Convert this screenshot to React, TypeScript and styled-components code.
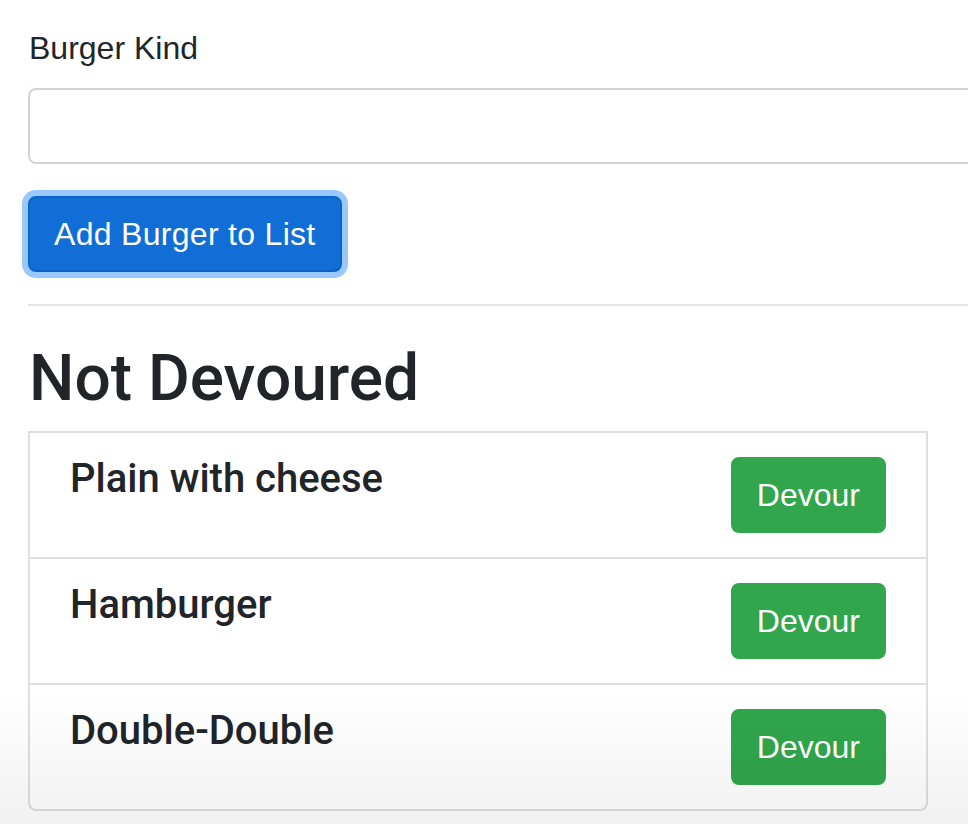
import React from "react";
import styled, { createGlobalStyle } from "styled-components";

const GlobalStyle = createGlobalStyle`
  html, body {
    margin: 0;
    padding: 0;
    background: #ffffff;
    overflow: hidden;
  }
  body {
    font-family: "Liberation Sans", Arial, sans-serif;
    color: #212529;
  }
  * { box-sizing: border-box; }
`;

const Page = styled.div`
  width: 1200px;
  padding: 24px 0 0 28px;
  min-height: 824px;
`;

const FormGroup = styled.div`
  display: flex;
  flex-direction: column;
  margin-bottom: 32px;
`;

const Label = styled.label`
  font-size: 32px;
  line-height: 48px;
  margin-bottom: 16px;
  padding-left: 1px;
`;

const TextInput = styled.input`
  display: block;
  width: 100%;
  height: 76px;
  border: 2px solid #ced4da;
  border-radius: 8px;
  background: #fff;
  font-size: 32px;
  padding: 12px 24px;
  font-family: inherit;
  outline: none;
`;

const PrimaryButton = styled.button`
  font-family: inherit;
  font-size: 32px;
  line-height: 48px;
  letter-spacing: 0.3px;
  padding: 12px 24px;
  color: #fff;
  background: #116ed7;
  border: 2px solid #0d63c8;
  border-radius: 8px;
  box-shadow: 0 0 0 6px #98c8fc;
  cursor: pointer;
  align-self: flex-start;
`;

const Rule = styled.hr`
  border: 0;
  border-top: 2px solid #e5e5e5;
  margin: 32px 0;
  height: 0;
`;

const Heading = styled.h2`
  font-family: Roboto, "Liberation Sans", Arial, sans-serif;
  font-size: 64px;
  font-weight: 500;
  line-height: 76.8px;
  margin: 0 0 13px 0;
  padding: 3px 0 0 1px;
`;

const ListGroup = styled.ul`
  list-style: none;
  margin: 0;
  padding: 0;
  width: 900px;
  display: flex;
  flex-direction: column;
`;

const ListItem = styled.li`
  display: flex;
  justify-content: space-between;
  align-items: flex-start;
  padding: 24px 40px;
  background: #fff;
  border: 2px solid #dfdfdf;
  border-top-width: 0;
  &:first-child {
    border-top-width: 2px;
  }
  &:last-child {
    border-radius: 0 0 8px 8px;
  }
`;

const ItemTitle = styled.h5`
  font-family: Roboto, "Liberation Sans", Arial, sans-serif;
  font-size: 40px;
  font-weight: 500;
  line-height: 48px;
  margin: -2px 0 0 0;
`;

const SuccessButton = styled.button`
  font-family: inherit;
  font-size: 32px;
  line-height: 48px;
  padding: 12px 24px;
  color: #fff;
  background: #31a64c;
  border: 2px solid #31a64c;
  border-radius: 8px;
  cursor: pointer;
`;

const BottomFade = styled.div`
  position: fixed;
  left: 0;
  right: 0;
  bottom: 0;
  height: 130px;
  pointer-events: none;
  background: linear-gradient(to bottom, rgba(0, 0, 0, 0), rgba(0, 0, 0, 0.055));
`;

const burgers = ["Plain with cheese", "Hamburger", "Double-Double"];

export default function App() {
  return (
    <>
      <GlobalStyle />
      <Page>
        <FormGroup>
          <Label htmlFor="burger">Burger Kind</Label>
          <TextInput id="burger" type="text" />
        </FormGroup>
        <PrimaryButton type="button">Add Burger to List</PrimaryButton>
        <Rule />
        <Heading>Not Devoured</Heading>
        <ListGroup>
          {burgers.map((b) => (
            <ListItem key={b}>
              <ItemTitle>{b}</ItemTitle>
              <SuccessButton type="button">Devour</SuccessButton>
            </ListItem>
          ))}
        </ListGroup>
      </Page>
      <BottomFade />
    </>
  );
}
